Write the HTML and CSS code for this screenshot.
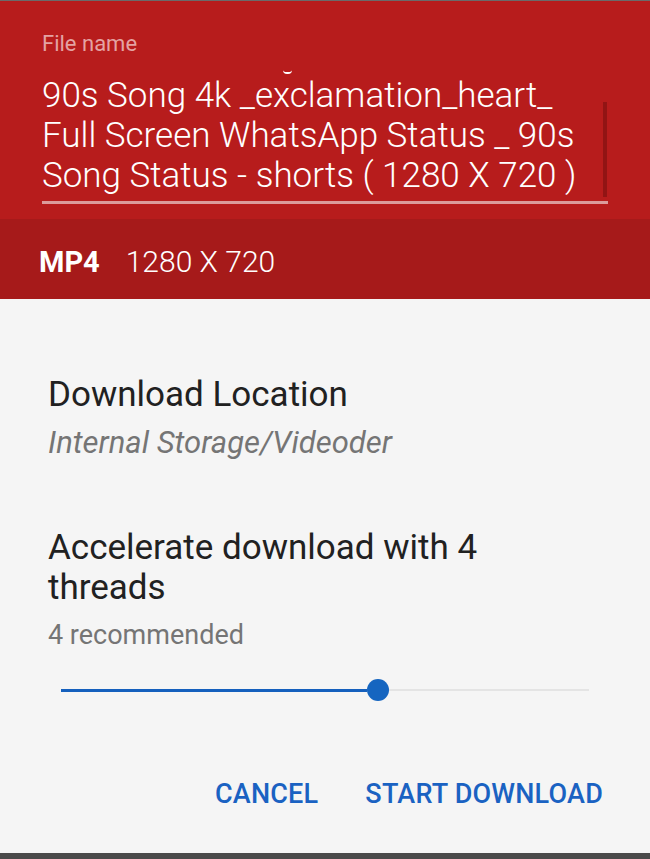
FILE: index.html
```html
<!DOCTYPE html>
<html>
<head>
<meta charset="utf-8">
<link rel="stylesheet" href="styles.css">
</head>
<body>
<div class="dialog">
  <div class="header">
    <div class="label">File name</div>
    <div class="field">
      <div class="field-text">90s Song 4k _exclamation_heart_ Full Screen WhatsApp Status _ 90s Song Status - shorts ( 1280 X 720 )</div>
      <div class="scrollbar"></div>
      <span class="descender"></span>
    </div>
  </div>
  <div class="format">
    <span class="fmt">MP4</span>
    <span class="res">1280 X 720</span>
  </div>
  <div class="body">
    <div class="section">
      <div class="title">Download Location</div>
      <div class="path">Internal Storage/Videoder</div>
    </div>
    <div class="section threads">
      <div class="title">Accelerate download with 4 threads</div>
      <div class="hint">4 recommended</div>
      <div class="slider">
        <div class="track-active"></div>
        <div class="thumb"></div>
        <div class="track-rest"></div>
      </div>
    </div>
    <div class="actions">
      <span class="btn">CANCEL</span>
      <span class="btn">START DOWNLOAD</span>
    </div>
  </div>
</div>
<div class="shade"></div>
</body>
</html>
```
FILE: styles.css
```css
html, body {
  margin: 0;
  padding: 0;
  background: #4a4a4a;
  font-family: Roboto, "Noto Sans", sans-serif;
}
.dialog {
  width: 650px;
  height: 853px;
  background: #f5f5f5;
  border-top: 1px solid #6a6a6a;
  box-sizing: border-box;
  display: flex;
  flex-direction: column;
}
.header {
  background: #b71c1c;
  height: 218px;
  flex: none;
  box-sizing: border-box;
  padding: 30px 42px 0 42px;
}
.label {
  font-size: 22px;
  line-height: 26px;
  color: #e4a3a3;
}
.field {
  position: relative;
  margin-top: 19px;
  padding-bottom: 5px;
  border-bottom: 3px solid #dc9b9b;
}
.field-text {
  font-size: 35px;
  line-height: 40px;
  color: #ffffff;
  font-weight: 300;
  padding-right: 10px;
}
.scrollbar {
  position: absolute;
  right: 1px;
  top: 26px;
  width: 4px;
  height: 95px;
  background: #921414;
}
.descender {
  position: absolute;
  left: 241px;
  top: -6px;
  width: 9px;
  height: 2px;
  border-bottom: 2px solid #ffffff;
  border-radius: 0 0 6px 6px;
}
.format {
  background: #a61a1a;
  height: 80px;
  flex: none;
  box-sizing: border-box;
  display: flex;
  align-items: center;
  padding: 5px 0 0 39px;
  color: #ffffff;
  gap: 26px;
}
.fmt {
  font-size: 29px;
  font-weight: 700;
}
.res {
  font-size: 30px;
  font-weight: 300;
}
.body {
  flex: 1;
  padding: 76px 47px 0 48px;
  display: flex;
  flex-direction: column;
}
.title {
  font-size: 35px;
  line-height: 40px;
  color: #212121;
}
.path {
  font-size: 31px;
  line-height: 36px;
  margin-top: 10px;
  font-style: italic;
  color: #757575;
}
.threads {
  margin-top: 67px;
  width: 545px;
}
.hint {
  font-size: 27px;
  line-height: 32px;
  margin-top: 11px;
  color: #757575;
}
.slider {
  display: flex;
  align-items: center;
  width: 528px;
  margin-left: 13px;
  margin-top: 27px;
  height: 24px;
}
.track-active {
  width: 306px;
  height: 3px;
  background: #1560bd;
}
.thumb {
  width: 22px;
  height: 22px;
  border-radius: 50%;
  background: #1565c0;
}
.track-rest {
  flex: 1;
  height: 2px;
  background: #e4e4e4;
}
.actions {
  display: flex;
  justify-content: flex-end;
  gap: 47px;
  margin-top: 76px;
}
.btn {
  font-size: 27px;
  line-height: 32px;
  font-weight: 500;
  letter-spacing: 0.2px;
  color: #1a62c2;
}
.shade {
  height: 6px;
  background: #4a4a4a;
}
```
